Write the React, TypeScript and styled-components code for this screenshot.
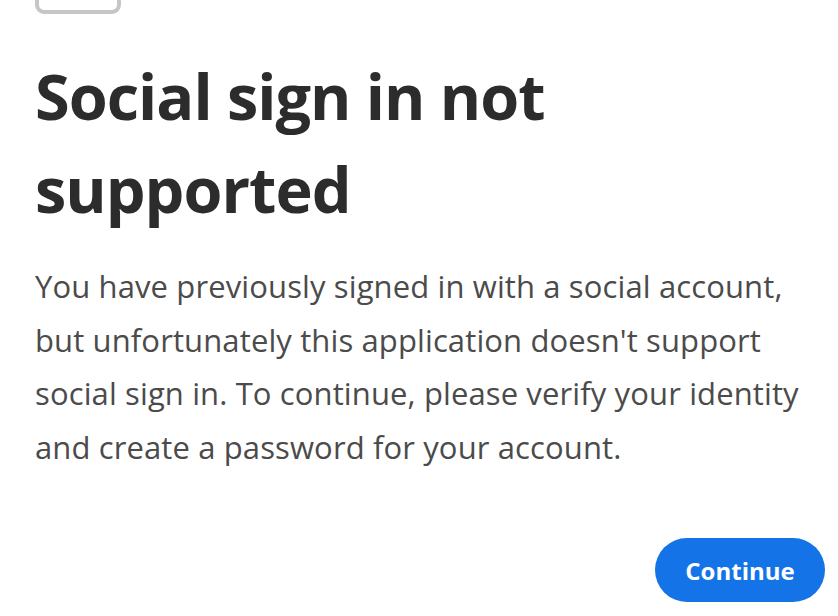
import React from "react";
import styled, { createGlobalStyle } from "styled-components";

const GlobalStyle = createGlobalStyle`
  html, body {
    margin: 0;
    padding: 0;
    background: #FFFFFF;
  }
  body {
    font-family: 'Open Sans', 'Liberation Sans', sans-serif;
    -webkit-font-smoothing: antialiased;
  }
`;

const Page = styled.main`
  width: 838px;
  height: 616px;
  overflow: hidden;
  box-sizing: border-box;
  padding: 0 13px 0 35px;
  display: flex;
  flex-direction: column;
`;

const LogoSlot = styled.div`
  width: 86px;
  height: 40px;
  margin-top: -26px;
  box-sizing: border-box;
  border: 4px solid #C6C6C6;
  border-radius: 9px;
  flex-shrink: 0;
`;

const Title = styled.h1`
  margin: 35px 0 0 0;
  font-size: 63px;
  line-height: 93px;
  font-weight: 700;
  color: #2C2C2C;
  letter-spacing: -1px;
`;

const Body = styled.p`
  margin: 25px 0 0 0;
  font-size: 31px;
  line-height: 53.5px;
  font-weight: 400;
  color: #4B4B4B;
  letter-spacing: 0.12px;
`;

const Actions = styled.div`
  margin-top: auto;
  padding-bottom: 14px;
  display: flex;
  justify-content: flex-end;
`;

const PrimaryButton = styled.button`
  width: 170px;
  height: 64px;
  border: none;
  border-radius: 32px;
  background: #1473E6;
  color: #FFFFFF;
  font-family: inherit;
  font-size: 24px;
  font-weight: 700;
  cursor: pointer;
`;

export default function App() {
  return (
    <>
      <GlobalStyle />
      <Page>
        <LogoSlot />
        <Title>
          Social sign in not
          <br />
          supported
        </Title>
        <Body>
          You have previously signed in with a social account,
          <br />
          but unfortunately this application doesn't support
          <br />
          social sign in. To continue, please verify your identity
          <br />
          and create a password for your account.
        </Body>
        <Actions>
          <PrimaryButton>Continue</PrimaryButton>
        </Actions>
      </Page>
    </>
  );
}
